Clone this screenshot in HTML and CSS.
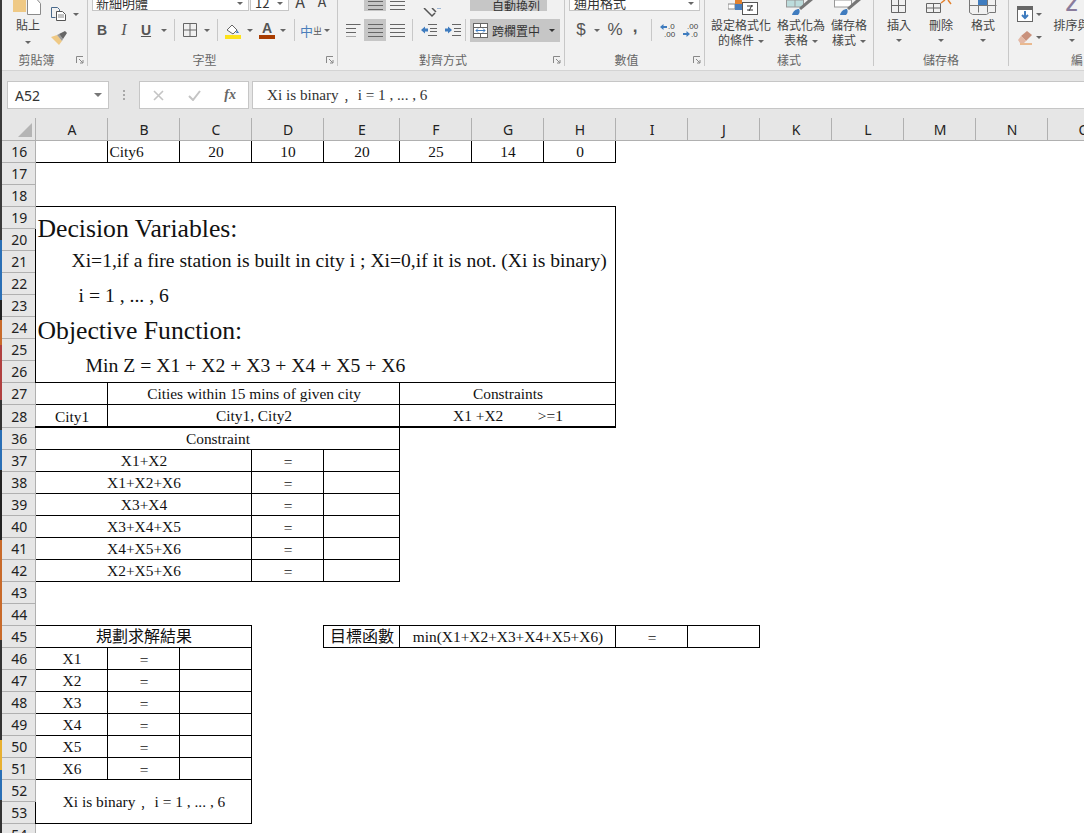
FILE: index.html
```html
<!DOCTYPE html>
<html lang="zh-Hant">
<head>
    <meta charset="UTF-8">
    <title>Excel</title>
    <link rel="stylesheet" href="styles.css">
</head>
<body>
<div class="edge"></div>
<div class="app">

<!-- ribbon, top part is cut off by the window -->
<div class="ribbon">
  <div class="group g-clip">
    <div class="group-body clip-body">
      <div class="big paste">
        <svg class="big-icon" width="30" height="15" viewBox="0 0 30 15"><rect x="0" y="0" width="13" height="12" fill="#efc985"/><path d="M14.5 0v14.500h13v-11l-3-3.500" fill="#fff" stroke="#8a8a8a"/></svg>
        <div class="big-text">貼上</div>
        <div class="caret-line"><i class="caret"></i></div>
      </div>
      <div class="small-col">
        <div class="small-row">
          <svg width="16" height="14" viewBox="0 0 16 14"><path d="M.5.5h6l2 2v2M.5.5v10h4" fill="none" stroke="#4a6a8c"/><path d="M5.500 4.500h6l3 3v6h-9z" fill="#fff" stroke="#555"/><path d="M7 8h6M7 10h6" stroke="#888"/></svg>
          <i class="caret caret-copy"></i>
        </div>
        <div class="small-row brush-row">
          <svg width="17" height="15" viewBox="0 0 17 15"><path d="M0 6l6-2 5 6-3 4z" fill="#efc985"/><path d="M6 4l2-1 4 5-1 2z" fill="#999"/><path d="M8 3l6-3 2 2-4 6z" fill="#666"/></svg>
        </div>
      </div>
    </div>
    <div class="group-label shifted">剪貼簿</div>
    <svg class="launcher" width="8" height="8" viewBox="0 0 8 8"><path d="M.5 7V.5H7M3 3l4 4M7 4v3H4" fill="none" stroke="#888"/></svg>
  </div>

  <div class="group g-font">
    <div class="group-body">
      <div class="top-row font-top">
        <div class="select font-name">新細明體<i class="caret"></i></div>
        <div class="select font-size">12<i class="caret"></i></div>
        <span class="grow-a">A</span><span class="grow-a shrink-a">A</span>
      </div>
      <div class="tool-row font-tools">
        <span class="tool fmt bold">B</span>
        <span class="tool fmt ital">I</span>
        <span class="tool fmt under">U</span>
        <span class="tool-caret w14"><i class="caret"></i></span>
        <span class="sep sep-b"></span>
        <span class="tool w23"><svg width="14" height="14" viewBox="0 0 14 14"><path d="M.5.5h13v13H.5zM7 .5v13M.5 7h13" fill="none" stroke="#666"/></svg></span>
        <span class="tool-caret w11"><i class="caret"></i></span>
        <span class="sep sep-c"></span>
        <span class="tool w24 fill"><svg width="17" height="15" viewBox="0 0 17 15"><path d="M2 6l5-5 5 5-4 4z" fill="#fff" stroke="#666"/><path d="M12 6l2 3h-3z" fill="#4a7ebb"/><rect x="0" y="11" width="16" height="4" fill="#fde21c"/></svg></span>
        <span class="tool-caret w10"><i class="caret"></i></span>
        <span class="tool w20 color"><span class="color-a">A</span></span>
        <span class="tool-caret w12"><i class="caret"></i></span>
        <span class="sep sep-d"></span>
        <span class="tool w24 phon"><span class="phon-zh">中</span><span class="phon-side">ㄓ</span></span>
        <span class="tool-caret w8"><i class="caret"></i></span>
      </div>
    </div>
    <div class="group-label shifted">字型</div>
    <svg class="launcher" width="8" height="8" viewBox="0 0 8 8"><path d="M.5 7V.5H7M3 3l4 4M7 4v3H4" fill="none" stroke="#888"/></svg>
  </div>

  <div class="group g-align">
    <div class="group-body">
      <div class="top-row align-top">
        <span class="tool-top active"><i class="lines lines-c"></i></span>
        <span class="tool-top"><i class="lines lines-r"></i></span>
        <span class="orient"><svg width="20" height="11" viewBox="0 0 20 11"><path d="M1 0l8 8 3-3M9 0l4 4" fill="none" stroke="#555" stroke-width="1.500"/><path d="M14 0l4 0" stroke="#4a7ebb"/></svg></span>
        <span class="wide-btn wrap-btn">自動換列</span>
      </div>
      <div class="tool-row align-tools">
        <span class="tool-a"><i class="lines lines-l"></i></span>
        <span class="tool-a active"><i class="lines lines-c"></i></span>
        <span class="tool-a"><i class="lines lines-r"></i></span>
        <span class="sep sep-e"></span>
        <span class="tool-b"><svg width="16" height="12" viewBox="0 0 16 12"><path d="M7 .5h9M9 4.500h7M9 7.500h7M7 11.500h9" stroke="#666"/><path d="M0 6l4-3.500v2h3v3H4v2z" fill="#3f7cbf"/></svg></span>
        <span class="tool-b"><svg width="16" height="12" viewBox="0 0 16 12"><path d="M7 .5h9M9 4.500h7M9 7.500h7M7 11.500h9" stroke="#666"/><path d="M7 6L3 2.500v2H0v3h3v2z" fill="#3f7cbf"/></svg></span>
        <span class="sep sep-f"></span>
        <span class="wide-btn merge-btn">
          <svg width="15" height="15" viewBox="0 0 15 15"><rect x=".5" y=".5" width="14" height="14" fill="#fff" stroke="#666"/><path d="M.5 4.500h14M.5 10.500h14M7.500.5v4M7.500 10.500v4" stroke="#666"/><path d="M3 7.500h9M3 7.500l2-2M3 7.500l2 2M12 7.500l-2-2M12 7.500l-2 2" stroke="#3f7cbf"/></svg>
          <span class="merge-text">跨欄置中</span><i class="caret dark"></i>
        </span>
      </div>
    </div>
    <div class="group-label shifted">對齊方式</div>
    <svg class="launcher" width="8" height="8" viewBox="0 0 8 8"><path d="M.5 7V.5H7M3 3l4 4M7 4v3H4" fill="none" stroke="#888"/></svg>
  </div>

  <div class="group g-num">
    <div class="group-body">
      <div class="top-row num-top">
        <div class="select num-format">通用格式<i class="caret"></i></div>
      </div>
      <div class="tool-row num-tools">
        <span class="tool num-sym dollar">$</span>
        <span class="tool-caret w10"><i class="caret"></i></span>
        <span class="tool num-sym pct">%</span>
        <span class="tool num-sym comma">,</span>
        <span class="sep sep-g"></span>
        <span class="tool dec"><svg width="16" height="15" viewBox="0 0 16 15"><path d="M0 4l3.500-3v2H7v2H3.500v2z" fill="#3f7cbf"/><text x="8" y="6" class="dec-t">.0</text><text x="4" y="14" class="dec-t">.00</text></svg></span>
        <span class="tool dec"><svg width="16" height="15" viewBox="0 0 16 15"><text x="4" y="6" class="dec-t">.00</text><path d="M7 11L3.500 8v2H0v2h3.500v2z" fill="#3f7cbf"/><text x="8" y="14" class="dec-t">.0</text></svg></span>
      </div>
    </div>
    <div class="group-label shifted">數值</div>
    <svg class="launcher" width="8" height="8" viewBox="0 0 8 8"><path d="M.5 7V.5H7M3 3l4 4M7 4v3H4" fill="none" stroke="#888"/></svg>
  </div>

  <div class="group g-styles">
    <div class="group-body big-row">
      <div class="big style-a">
        <svg class="big-icon" width="30" height="15" viewBox="0 0 30 15"><rect x="0" y="4" width="7" height="5" fill="#fff" stroke="#888"/><rect x="7" y="0" width="7" height="4" fill="#e2812e"/><rect x="7" y="4" width="7" height="6" fill="#4a7ebb"/><rect x="14.500" y="2.500" width="15" height="12" fill="#fff" stroke="#555"/><path d="M19 6h6M19 10h6M24 5l-3 6" stroke="#333"/></svg>
        <div class="big-text">設定格式化</div>
        <div class="big-text">的條件<i class="caret"></i></div>
      </div>
      <div class="big style-b">
        <svg class="big-icon" width="30" height="15" viewBox="0 0 30 15"><rect x=".5" y="0" width="17" height="7" fill="#bcdcdc" stroke="#999"/><path d="M9 0v7" stroke="#999"/><path d="M6 15c1-4 4-6 7-6 1 2 1 4-1 6z" fill="#3f7cbf"/><path d="M13 8l9-8h5l-12 10z" fill="#777"/></svg>
        <div class="big-text">格式化為</div>
        <div class="big-text">表格<i class="caret"></i></div>
      </div>
      <div class="big style-c">
        <svg class="big-icon" width="30" height="15" viewBox="0 0 30 15"><rect x=".5" y="0" width="17" height="7" fill="#fff" stroke="#999"/><path d="M6 15c1-4 4-6 7-6 1 2 1 4-1 6z" fill="#3f7cbf"/><path d="M13 8l9-8h5l-12 10z" fill="#777"/></svg>
        <div class="big-text">儲存格</div>
        <div class="big-text">樣式<i class="caret"></i></div>
      </div>
    </div>
    <div class="group-label">樣式</div>
  </div>

  <div class="group g-cells">
    <div class="group-body big-row">
      <div class="big cell-btn">
        <svg class="big-icon" width="16" height="15" viewBox="0 0 16 15"><path d="M.5 0v12.500h14V0M.5 5.500h14M7.500 0v12.500" fill="none" stroke="#666"/></svg>
        <div class="big-text">插入</div>
        <div class="caret-line"><i class="caret"></i></div>
      </div>
      <div class="big cell-btn">
        <svg class="big-icon" width="30" height="15" viewBox="0 0 30 15"><path d="M.5 3.500h14v9H.5zM.5 8h14M7.500 3.500v9" fill="none" stroke="#666"/><path d="M15 3l4-3M22 0l3 4" fill="none" stroke="#e2812e" stroke-width="1.500"/></svg>
        <div class="big-text">刪除</div>
        <div class="caret-line"><i class="caret"></i></div>
      </div>
      <div class="big cell-btn">
        <svg class="big-icon" width="28" height="15" viewBox="0 0 28 15"><path d="M.5 0v12.500l3 2h14l3-2h6V0M.5 5.500h27M9.500 0v12.500M18.500 0v12.500" fill="none" stroke="#777"/><rect x="9" y="0" width="9" height="5" fill="#3f7cbf"/></svg>
        <div class="big-text">格式</div>
        <div class="caret-line"><i class="caret"></i></div>
      </div>
    </div>
    <div class="group-label">儲存格</div>
  </div>

  <div class="group g-edit">
    <div class="group-body edit-body">
      <div class="small-col">
        <div class="small-row fill-row">
          <svg width="16" height="16" viewBox="0 0 16 16"><rect x=".5" y=".5" width="15" height="15" fill="#fff" stroke="#666"/><rect x="0" y="0" width="16" height="4" fill="#666"/><path d="M8 5v7M5 9l3 3 3-3" fill="none" stroke="#3f7cbf" stroke-width="2"/></svg>
          <i class="caret caret-fill"></i>
        </div>
        <div class="small-row erase-row">
          <svg width="16" height="15" viewBox="0 0 16 15"><path d="M4 6l6-5 5 4-6 6z" fill="#c9917c"/><path d="M1 10l3-4 5 5-2 2H3z" fill="#e4b9a6"/><path d="M3 14h12" stroke="#e2812e"/></svg>
          <i class="caret caret-fill"></i>
        </div>
      </div>
      <div class="big sort">
        <div class="sort-icon">Z</div>
        <div class="big-text">排序與</div>
        <div class="caret-line"><i class="caret"></i></div>
      </div>
    </div>
    <div class="group-label edit-label">編</div>
  </div>
</div>

<!-- formula bar -->
<div class="formula-bar">
  <div class="name-box"><span>A52</span><i class="caret"></i></div>
  <div class="grip"><i></i><i></i><i></i></div>
  <div class="fx-box">
    <svg width="11" height="11" viewBox="0 0 11 11"><path d="M1 1l9 9M10 1l-9 9" stroke="#c4c4c4" stroke-width="1.600"/></svg>
    <svg width="13" height="11" viewBox="0 0 13 11"><path d="M1 6l4 4 7-9" fill="none" stroke="#c4c4c4" stroke-width="2"/></svg>
    <span class="fx">fx</span>
  </div>
  <div class="formula-input">Xi is binary﹐ i = 1 , ... , 6</div>
</div>

<div class="head-gap"></div>

<!-- sheet -->
<table class="sheet">
  <colgroup>
    <col class="c-head"><col class="c"><col class="c"><col class="c"><col class="c"><col class="c-e"><col class="c"><col class="c"><col class="c"><col class="c"><col class="c"><col class="c"><col class="c"><col class="c"><col class="c"><col class="c">
  </colgroup>
  <thead>
    <tr>
      <th class="corner"><i class="tri"></i></th>
      <th>A</th><th>B</th><th>C</th><th>D</th><th>E</th><th>F</th><th>G</th><th>H</th><th>I</th><th>J</th><th>K</th><th>L</th><th>M</th><th>N</th><th>O</th>
    </tr>
  </thead>
  <tbody>
    <tr><th>16</th><td class="b"></td><td class="b left">City6</td><td class="b">20</td><td class="b">10</td><td class="b">20</td><td class="b">25</td><td class="b">14</td><td class="b">0</td><td colspan="7"></td></tr>
    <tr><th>17</th><td colspan="15"></td></tr>
    <tr><th>18</th><td colspan="15"></td></tr>
    <tr>
      <th>19</th>
      <td class="b box" colspan="8" rowspan="8">
        <div class="title">Decision Variables:</div>
        <div class="line indent-a">Xi=1,if a fire station is built in city i ; Xi=0,if it is not. (Xi is binary)</div>
        <div class="line indent-b">i = 1 , ... , 6</div>
        <div class="title">Objective Function:</div>
        <div class="line indent-c">Min Z = X1 + X2 + X3 + X4 + X5 + X6</div>
      </td>
      <td colspan="7" rowspan="8"></td>
    </tr>
    <tr><th>20</th></tr>
    <tr><th>21</th></tr>
    <tr><th>22</th></tr>
    <tr><th>23</th></tr>
    <tr><th>24</th></tr>
    <tr><th>25</th></tr>
    <tr><th>26</th></tr>
    <tr><th>27</th><td class="b"></td><td class="b" colspan="4">Cities within 15 mins of given city</td><td class="b" colspan="3">Constraints</td><td colspan="7"></td></tr>
    <tr class="thick"><th>28</th><td class="b low">City1</td><td class="b" colspan="4">City1, City2</td><td class="b" colspan="3">X1 +X2 &nbsp; &nbsp; &nbsp; &nbsp; &gt;=1</td><td colspan="7"></td></tr>
    <tr><th>36</th><td class="b" colspan="5">Constraint</td><td colspan="10"></td></tr>
    <tr><th>37</th><td class="b" colspan="3">X1+X2</td><td class="b low">=</td><td class="b"></td><td colspan="10"></td></tr>
    <tr><th>38</th><td class="b" colspan="3">X1+X2+X6</td><td class="b low">=</td><td class="b"></td><td colspan="10"></td></tr>
    <tr><th>39</th><td class="b" colspan="3">X3+X4</td><td class="b low">=</td><td class="b"></td><td colspan="10"></td></tr>
    <tr><th>40</th><td class="b" colspan="3">X3+X4+X5</td><td class="b low">=</td><td class="b"></td><td colspan="10"></td></tr>
    <tr><th>41</th><td class="b" colspan="3">X4+X5+X6</td><td class="b low">=</td><td class="b"></td><td colspan="10"></td></tr>
    <tr><th>42</th><td class="b" colspan="3">X2+X5+X6</td><td class="b low">=</td><td class="b"></td><td colspan="10"></td></tr>
    <tr><th>43</th><td colspan="15"></td></tr>
    <tr><th>44</th><td colspan="15"></td></tr>
    <tr><th>45</th><td class="b zh" colspan="3">規劃求解結果</td><td></td><td class="b zh">目標函數</td><td class="b" colspan="3">min(X1+X2+X3+X4+X5+X6)</td><td class="b low">=</td><td class="b"></td><td colspan="5"></td></tr>
    <tr><th>46</th><td class="b">X1</td><td class="b low">=</td><td class="b"></td><td colspan="12"></td></tr>
    <tr><th>47</th><td class="b">X2</td><td class="b low">=</td><td class="b"></td><td colspan="12"></td></tr>
    <tr><th>48</th><td class="b">X3</td><td class="b low">=</td><td class="b"></td><td colspan="12"></td></tr>
    <tr><th>49</th><td class="b">X4</td><td class="b low">=</td><td class="b"></td><td colspan="12"></td></tr>
    <tr><th>50</th><td class="b">X5</td><td class="b low">=</td><td class="b"></td><td colspan="12"></td></tr>
    <tr><th>51</th><td class="b">X6</td><td class="b low">=</td><td class="b"></td><td colspan="12"></td></tr>
    <tr><th>52</th><td class="b" colspan="3" rowspan="2">Xi is binary﹐ i = 1 , ... , 6</td><td colspan="12" rowspan="2"></td></tr>
    <tr><th>53</th></tr>
    <tr><th>54</th><td colspan="15"></td></tr>
  </tbody>
</table>

</div>
</body>
</html>
```

FILE: styles.css
```css
* { box-sizing: border-box; }

html, body {
  margin: 0;
  height: 100%;
  overflow: hidden;
}
body {
  display: flex;
  background: #fff;
  font-family: "Noto Sans CJK TC", "Noto Sans", sans-serif;
  color: #444;
}

/* sliver of the desktop behind the window */
.edge {
  flex: 0 0 2px;
  background: linear-gradient(to bottom,
    #3a3a3a 0, #3a3a3a 240px, #2a6fb5 240px, #2a6fb5 300px, #222 300px, #222 320px,
    #c86a2a 320px, #c86a2a 345px, #b04040 345px, #b04040 400px, #333 400px, #333 430px,
    #2a6fb5 430px, #2a6fb5 470px, #222 470px, #222 540px, #c86a2a 540px, #c86a2a 640px,
    #333 640px, #333 740px, #e8b030 740px, #e8b030 770px, #2a6fb5 770px, #2a6fb5 800px, #333 800px);
}
.app {
  flex: 1;
  min-width: 0;
  overflow: hidden;
}

/* ---- ribbon ---- */
.ribbon {
  display: flex;
  height: 71px;
  background: #f1f1f1;
  border-bottom: 1px solid #d4d4d4;
  overflow: hidden;
}
.group {
  position: relative;
  flex: none;
  height: 66px;
  display: flex;
  flex-direction: column;
  border-right: 1px solid #c8c8c8;
}
.g-clip { width: 86px; }
.g-font { width: 250px; }
.g-align { width: 227px; }
.g-num { width: 140px; }
.g-styles { width: 169px; }
.g-cells { width: 135px; }
.g-edit { flex: 1; border-right: 0; }
.group-body {
  flex: 1;
  min-height: 0;
}
.group-label {
  flex: none;
  height: 14px;
  line-height: 15px;
  text-align: center;
  font-size: 12px;
  color: #666;
  white-space: nowrap;
}
.group-label.shifted { padding-right: 16px; }
.edit-label { text-align: left; padding-left: 62px; }
.launcher {
  position: absolute;
  right: 3px;
  bottom: 2px;
}

.caret {
  display: inline-block;
  width: 0;
  height: 0;
  border: 3px solid transparent;
  border-top: 3px solid #666;
  border-bottom: 0;
  vertical-align: middle;
}
.caret.dark { border-top-color: #333; }

.big { text-align: center; }
.big-icon { display: block; margin: 0 auto 2px; }
.big-text {
  font-size: 12px;
  line-height: 15px;
  white-space: nowrap;
}
.big-text .caret { margin-left: 4px; }
.caret-line { height: 15px; line-height: 12px; }

.clip-body, .edit-body, .big-row { display: flex; }
.paste { width: 30px; margin-left: 11px; }
.paste .caret-line { margin-top: 2px; }
.small-col { margin-left: 8px; }
.small-row { display: flex; align-items: center; }
.small-row:first-child { margin-top: 7px; }
.brush-row { margin-top: 10px; }
.caret-copy { margin-left: 6px; }

.top-row {
  display: flex;
  height: 11px;
  margin-bottom: 8px;
}
.select {
  position: relative;
  height: 11px;
  background: #fff;
  border: 1px solid #c6c6c6;
  border-top: 0;
  font-size: 13px;
  line-height: 6px;
  color: #333;
  overflow: hidden;
}
.select .caret { position: absolute; right: 5px; top: 2px; }
.font-top { padding-left: 4px; }
.font-name { width: 157px; padding-left: 3px; }
.font-size { width: 39px; margin-left: 1px; padding-left: 4px; }
.grow-a {
  margin-left: 3px;
  width: 16px;
  text-align: center;
  font-size: 16px;
  line-height: 3px;
}
.shrink-a { margin-left: 6px; font-size: 14px; }

.tool-row {
  display: flex;
  align-items: center;
  height: 22px;
}
.tool, .tool-caret {
  flex: none;
  display: flex;
  align-items: center;
  justify-content: center;
  height: 22px;
}
.fmt {
  width: 22px;
  font-family: "Liberation Sans", sans-serif;
  font-size: 14px;
  color: #555;
}
.bold { font-weight: bold; }
.ital { font-family: "Liberation Serif", serif; font-style: italic; font-size: 16px; }
.under { text-decoration: underline; font-weight: bold; }
.font-tools { padding-left: 3px; }
.w8 { width: 8px; }
.w10 { width: 10px; }
.w11 { width: 11px; }
.w12 { width: 12px; }
.w14 { width: 14px; }
.w20 { width: 20px; }
.w23 { width: 23px; }
.w24 { width: 24px; }
.sep {
  flex: none;
  width: 1px;
  height: 22px;
  background: #c8c8c8;
}
.sep-b { margin: 0 3px; }
.sep-c { margin: 0 3px 0 5px; }
.sep-d { margin: 0 4px 0 5px; }
.sep-e { margin: 0 4px 0 4px; }
.sep-f { margin: 0 4px 0 0; }
.sep-g { margin: 0 4px 0 9px; }
.fill { padding-top: 3px; }
.color { margin-left: 2px; }
.color-a {
  display: block;
  width: 16px;
  text-align: center;
  font-family: "Liberation Sans", sans-serif;
  font-weight: bold;
  font-size: 14px;
  line-height: 14px;
  border-bottom: 4px solid #a83c00;
  color: #555;
}
.phon { font-size: 13px; color: #4a7ebb; gap: 0; }
.phon-side { font-size: 9px; color: #555; }

.align-top { padding-left: 26px; }
.tool-top {
  width: 22px;
  height: 11px;
  overflow: hidden;
  display: flex;
  justify-content: center;
  align-items: flex-end;
  padding-bottom: 1px;
}
.active { background: #c6c6c6; }
.lines {
  display: block;
  width: 15px;
  height: 9px;
  background: repeating-linear-gradient(to bottom, #666 0, #666 1px, transparent 1px, transparent 4px);
}
.tool-a .lines { height: 13px; }
.lines-l { clip-path: polygon(0 0, 100% 0, 100% 30%, 70% 30%, 70% 100%, 0 100%); }
.lines-c { clip-path: none; }
.orient { width: 20px; margin-left: 15px; }
.wide-btn {
  display: flex;
  align-items: center;
  background: #c6c6c6;
  font-size: 13px;
  color: #333;
}
.wrap-btn {
  width: 77px;
  height: 11px;
  margin-left: 27px;
  padding-left: 22px;
  line-height: 8px;
  overflow: hidden;
  font-size: 12px;
}
.align-tools { padding-left: 4px; }
.tool-a {
  flex: none;
  width: 22px;
  height: 22px;
  display: flex;
  align-items: center;
  justify-content: center;
}
.tool-b {
  flex: none;
  width: 24px;
  display: flex;
  justify-content: center;
}
.merge-btn {
  width: 90px;
  height: 23px;
  padding-left: 3px;
}
.merge-text { margin-left: 4px; font-size: 12px; }
.merge-btn .caret { margin-left: 9px; }

.num-top { padding-left: 4px; }
.num-format { width: 131px; padding-left: 4px; }
.num-tools { padding-left: 5px; }
.num-sym { font-family: "Liberation Sans", sans-serif; color: #555; }
.dollar { width: 22px; font-size: 17px; }
.pct { width: 26px; font-size: 17px; }
.comma { width: 14px; font-weight: bold; font-size: 17px; padding-bottom: 6px; }
.dec { width: 23px; }
.dec-t { font-family: "Liberation Sans", sans-serif; font-size: 8px; fill: #444; }

.style-a, .style-b, .style-c { flex: none; }
.style-a { width: 66px; margin-left: 3px; }
.style-a .big-icon { margin-left: 20px; }
.style-b { width: 54px; }
.style-c { width: 42px; }
.g-cells .big-row { padding-left: 4px; }
.cell-btn { flex: none; width: 42px; }

.small-row.fill-row { margin-top: 6px; }
.erase-row { margin-top: 8px; }
.caret-fill { margin-left: 3px; }
.sort { margin-left: 7px; width: 45px; }
.sort-icon {
  height: 17px;
  line-height: 9px;
  font-family: "Liberation Sans", sans-serif;
  font-weight: bold;
  font-size: 19px;
  color: #8a7c9c;
}

/* ---- formula bar ---- */
.formula-bar {
  display: flex;
  height: 38px;
  padding-top: 10px;
  padding-left: 5px;
  background: #e6e6e6;
}
.name-box {
  display: flex;
  align-items: center;
  justify-content: space-between;
  width: 102px;
  padding: 0 6px 0 7px;
  background: #fff;
  border: 1px solid #c6c6c6;
  font-family: "Noto Sans", sans-serif;
  font-size: 14px;
  color: #333;
}
.name-box .caret { border-width: 4px; border-bottom: 0; border-top-color: #777; }
.grip {
  width: 30px;
  display: flex;
  flex-direction: column;
  align-items: center;
  justify-content: center;
  gap: 2px;
}
.grip i { width: 2px; height: 2px; background: #a8a8a8; }
.fx-box {
  display: flex;
  align-items: center;
  justify-content: space-between;
  width: 110px;
  padding: 0 12px 0 13px;
  background: #fff;
  border: 1px solid #c6c6c6;
}
.fx {
  font-family: "Liberation Serif", serif;
  font-style: italic;
  font-weight: bold;
  font-size: 14px;
  color: #666;
}
.formula-input {
  flex: 1;
  margin-left: 3px;
  padding-left: 14px;
  background: #fff;
  border-left: 1px solid #c6c6c6;
  border-top: 1px solid #c6c6c6;
  border-bottom: 1px solid #c6c6c6;
  font-family: "Liberation Serif", "Noto Sans CJK TC", serif;
  font-size: 15.2px;
  line-height: 26px;
  color: #333;
  white-space: nowrap;
}
.head-gap {
  height: 9px;
  background: #e6e6e6;
}

/* ---- sheet ---- */
.sheet {
  table-layout: fixed;
  width: 1117px;
  border-collapse: collapse;
  font-family: "Liberation Serif", "Noto Sans CJK TC", serif;
  font-size: 15.4px;
  color: #111;
}
.c-head { width: 33px; }
.c { width: 72px; }
.c-e { width: 76px; }
.sheet tr { height: 22px; }
.sheet tr.thick { height: 23px; }
.sheet th {
  padding: 2px 0 0 2px;
  background: #e6e6e6;
  border-right: 1px solid #b0b0b0;
  border-bottom: 1px solid #b0b0b0;
  font-family: "Noto Sans", sans-serif;
  font-weight: normal;
  font-size: 14px;
  line-height: 18px;
  color: #222;
}
.corner { position: relative; }
.tri {
  position: absolute;
  right: 3px;
  bottom: 3px;
  width: 0;
  height: 0;
  border-style: solid;
  border-width: 0 0 14px 14px;
  border-color: transparent transparent #b4b4b4 transparent;
}
.sheet td {
  padding: 2px 0 0 2px;
  line-height: 18px;
  text-align: center;
  white-space: nowrap;
  overflow: hidden;
}
.sheet td.b { border: 1px solid #000; }
.sheet td.left { text-align: left; padding-left: 2px; }
.sheet td.low { padding-top: 4px; line-height: 16px; }
.sheet td.zh { font-size: 16px; }
.thick td.b { border-bottom: 2px solid #000; }

.sheet td.box {
  vertical-align: top;
  padding: 5px 0 0 2px;
  text-align: left;
}
.title {
  font-size: 25.7px;
  line-height: 34px;
}
.line {
  font-size: 19.7px;
  line-height: 34px;
}
.indent-a { margin-left: 34px; margin-top: -2px; font-size: 19.6px; }
.indent-b { margin-left: 41px; margin-bottom: 2px; }
.indent-c { margin-left: 48px; }
```
